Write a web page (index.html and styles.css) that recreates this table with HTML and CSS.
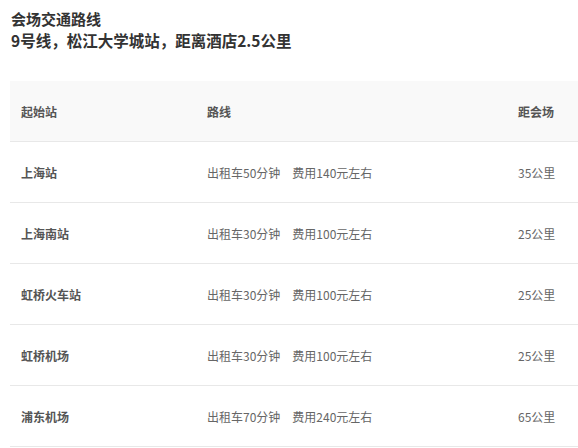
FILE: index.html
```html
<!DOCTYPE html>
<html lang="zh">
<head>
<meta charset="utf-8">
<link rel="stylesheet" href="styles.css">
</head>
<body>
<div class="intro">
  <h2 class="title">会场交通路线</h2>
  <p class="subtitle">9号线，松江大学城站，距离酒店2.5公里</p>
</div>
<table class="routes">
  <colgroup><col class="c1"><col class="c2"><col class="c3"></colgroup>
  <thead>
    <tr><th>起始站</th><th>路线</th><th>距会场</th></tr>
  </thead>
  <tbody>
    <tr><td class="station">上海站</td><td>出租车50分钟<span class="gap"></span>费用140元左右</td><td>35公里</td></tr>
    <tr><td class="station">上海南站</td><td>出租车30分钟<span class="gap"></span>费用100元左右</td><td>25公里</td></tr>
    <tr><td class="station">虹桥火车站</td><td>出租车30分钟<span class="gap"></span>费用100元左右</td><td>25公里</td></tr>
    <tr><td class="station">虹桥机场</td><td>出租车30分钟<span class="gap"></span>费用100元左右</td><td>25公里</td></tr>
    <tr><td class="station">浦东机场</td><td>出租车70分钟<span class="gap"></span>费用240元左右</td><td>65公里</td></tr>
  </tbody>
</table>
</body>
</html>
```
FILE: styles.css
```css
html, body { margin: 0; padding: 0; background: #fff; }
body {
  padding: 9px 0 0 10px;
  font-family: "Noto Sans CJK SC", "Noto Sans", sans-serif;
  color: #333;
}
.intro { padding-left: 1px; }
.title {
  margin: 0;
  font-size: 15px;
  line-height: 20px;
  font-weight: bold;
  color: #333;
}
.subtitle {
  margin: 0;
  font-size: 15.5px;
  line-height: 22px;
  font-weight: bold;
  color: #333;
}
.routes {
  margin-top: 30px;
  width: 568px;
  border-collapse: collapse;
  table-layout: fixed;
  font-size: 12px;
  color: #666;
}
.c1 { width: 186px; }
.c2 { width: 311px; }
.c3 { width: 71px; }
.routes th, .routes td {
  text-align: left;
  padding: 0 0 0 11px;
  height: 60px;
  border-bottom: 1px solid #e8e8e8;
  white-space: nowrap;
}
.routes th {
  background: #f9f9f9;
  font-weight: bold;
  color: #555;
}
.station { font-weight: bold; color: #555; }
.gap { display: inline-block; width: 12px; }
```
